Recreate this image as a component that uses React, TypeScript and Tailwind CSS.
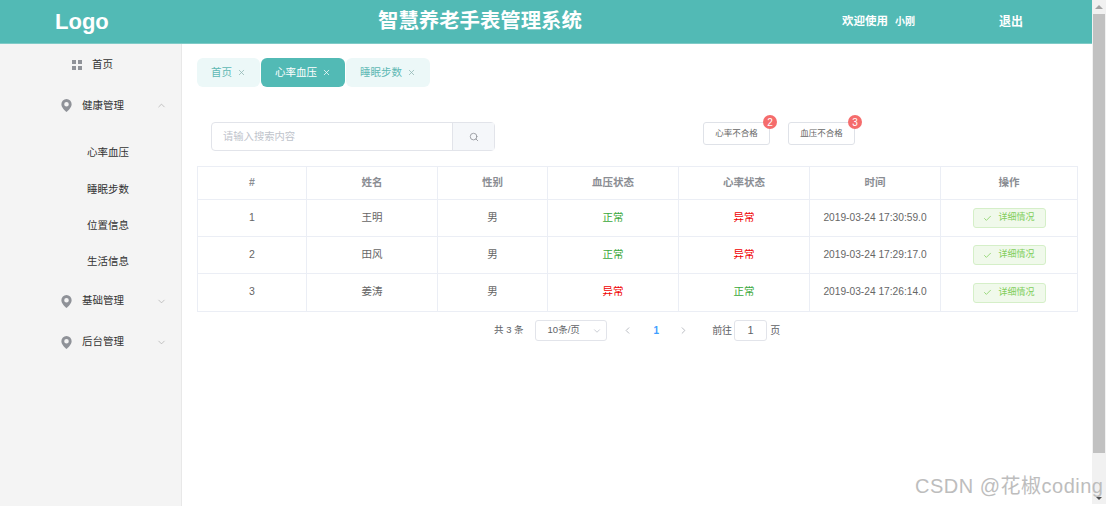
import React from 'react';
import { Check, ChevronDown, ChevronLeft, ChevronRight, ChevronUp, Search, X } from 'lucide-react';

const rows = [
  { id: 1, name: '王明', sex: '男', blood: '正常', heart: '异常', time: '2019-03-24 17:30:59.0' },
  { id: 2, name: '田风', sex: '男', blood: '正常', heart: '异常', time: '2019-03-24 17:29:17.0' },
  { id: 3, name: '姜涛', sex: '男', blood: '异常', heart: '正常', time: '2019-03-24 17:26:14.0' },
];

const headers = ['#', '姓名', '性别', '血压状态', '心率状态', '时间', '操作'];
const subMenu = ['心率血压', '睡眠步数', '位置信息', '生活信息'];

function Status({ value }: { value: string }) {
  return <span className={value === '正常' ? 'text-[#3aa83a]' : 'text-[#f00000]'}>{value}</span>;
}

function PinIcon() {
  return (
    <svg viewBox="0 0 12 14" className="h-[13px] w-[11px] fill-[#8f9298]">
      <path
        fillRule="evenodd"
        d="M6 0a5.6 5.6 0 0 1 5.6 5.6C11.600 9.200 7.500 12.800 6 14 4.500 12.800.4 9.200.4 5.600A5.600 5.600 0 0 1 6 0zm0 3.200a2.500 2.500 0 1 0 0 5 2.500 2.500 0 0 0 0-5z"
      />
    </svg>
  );
}

function MenuGroup({ label, open }: { label: string; open?: boolean }) {
  return (
    <div className="flex h-[41px] items-center pl-[61px] text-[10.5px] text-[#333]">
      <PinIcon />
      <span className="ml-[10px] w-[42px] whitespace-nowrap">{label}</span>
      {open ? (
        <ChevronUp className="ml-[32px] h-[11px] w-[11px] text-[#aaa]" strokeWidth={1.5} />
      ) : (
        <ChevronDown className="ml-[32px] h-[11px] w-[11px] text-[#aaa]" strokeWidth={1.5} />
      )}
    </div>
  );
}

function Tab({ label, active }: { label: string; active?: boolean }) {
  return (
    <div
      className={`flex h-[29px] items-center rounded-[6px] pl-[14px] pr-[14px] text-[10.5px] ${
        active ? 'bg-[#52bab5] text-white' : 'bg-[#ecf8f8] text-[#5fb9b4]'
      }`}
    >
      <span className="whitespace-nowrap">{label}</span>
      <X className={`ml-[5px] h-[9px] w-[9px] ${active ? 'text-white' : 'text-[#8fb5b3]'}`} />
    </div>
  );
}

function BadgeButton({ label, count }: { label: string; count: number }) {
  return (
    <div className="relative flex h-[23px] w-[67px] items-center justify-center rounded-[3px] border border-[#dfe2e8] bg-white text-[8.5px] text-[#666]">
      {label}
      <span className="absolute right-[-8px] top-[-8px] flex h-[14px] w-[14px] items-center justify-center rounded-full bg-[#f56c6c] text-[10px] text-white">
        {count}
      </span>
    </div>
  );
}

export default function App() {
  return (
    <div className="relative flex h-[506px] w-[1107px] overflow-hidden bg-white font-['Liberation_Sans','Noto_Sans_CJK_SC',sans-serif]">
      <div className="flex w-[1092px] flex-col">
        <header className="flex h-[44px] shrink-0 items-center border-b border-[#7fcbc7] bg-[#52bab5] text-white">
          <div className="w-[378px] pl-[55px] text-[22px] font-bold">Logo</div>
          <div className="w-[464px] text-[20.4px] font-bold">智慧养老手表管理系统</div>
          <div className="w-[157px] text-[11.5px] font-bold">
            欢迎使用<span className="ml-[7px] text-[10px]">小刚</span>
          </div>
          <div className="text-[12px] font-bold">退出</div>
        </header>

        <div className="flex flex-1">
          <aside className="w-[182px] shrink-0 border-r border-[#e8e8e8] bg-[#f4f4f4] pt-[1px]">
            <div className="flex h-[40px] items-center pl-[72px] text-[10.5px] text-[#333]">
              <div className="grid h-[10px] w-[10px] grid-cols-2 gap-[2px]">
                <span className="bg-[#8f9298]" />
                <span className="bg-[#8f9298]" />
                <span className="bg-[#8f9298]" />
                <span className="bg-[#8f9298]" />
              </div>
              <span className="ml-[10px]">首页</span>
            </div>
            <MenuGroup label="健康管理" open />
            <div className="pt-[9px]">
              {subMenu.map((item) => (
                <div key={item} className="flex h-[36.4px] items-center pl-[87px] text-[10.5px] text-[#333]">
                  {item}
                </div>
              ))}
            </div>
            <MenuGroup label="基础管理" />
            <MenuGroup label="后台管理" />
          </aside>

          <main className="flex-1 pl-[15px] pr-[14px] pt-[14px]">
            <div className="flex gap-[1px]">
              <Tab label="首页" />
              <Tab label="心率血压" active />
              <Tab label="睡眠步数" />
            </div>

            <div className="mt-[35px] flex h-[30px] items-start pl-[14px]">
              <div className="flex h-[29px] w-[284px] rounded-[4px] border border-[#e2e4ea]">
                <div className="flex-1 pl-[11px] text-[10.3px] leading-[27px] text-[#c0c4cc]">请输入搜索内容</div>
                <div className="flex w-[42px] items-center justify-center border-l border-[#e2e4ea] bg-[#f5f7fa]">
                  <Search className="h-[10px] w-[10px] text-[#909399]" />
                </div>
              </div>
              <div className="ml-[208px] flex gap-[18px]">
                <BadgeButton label="心率不合格" count={2} />
                <BadgeButton label="血压不合格" count={3} />
              </div>
            </div>

            <table className="mt-[14px] w-[880px] table-fixed border-collapse text-[10.5px] text-[#666]">
              <colgroup>
                <col className="w-[109px]" />
                <col className="w-[131px]" />
                <col className="w-[110px]" />
                <col className="w-[131px]" />
                <col className="w-[131px]" />
                <col className="w-[131px]" />
                <col className="w-[137px]" />
              </colgroup>
              <thead>
                <tr className="h-[33px]">
                  {headers.map((h) => (
                    <th key={h} className="border border-[#ebeef5] text-center font-bold text-[#8a8d93]">
                      {h}
                    </th>
                  ))}
                </tr>
              </thead>
              <tbody>
                {rows.map((r, i) => (
                  <tr key={r.id} className={`text-center ${i === 2 ? 'h-[38px]' : 'h-[37px]'}`}>
                    <td className="border border-[#ebeef5] pb-[1px]">{r.id}</td>
                    <td className="border border-[#ebeef5] pb-[1px]">{r.name}</td>
                    <td className="border border-[#ebeef5] pb-[1px]">{r.sex}</td>
                    <td className="border border-[#ebeef5] pb-[1px]"><Status value={r.blood} /></td>
                    <td className="border border-[#ebeef5] pb-[1px]"><Status value={r.heart} /></td>
                    <td className="border border-[#ebeef5] pb-[1px] text-[10.2px]">{r.time}</td>
                    <td className="border border-[#ebeef5]">
                      <div className="mx-auto flex h-[20px] w-[73px] items-center justify-center rounded-[3px] border border-[#d5efc8] bg-[#f0f9eb] text-[9px] text-[#7fce5a]">
                        <Check className="mr-[6px] h-[9px] w-[9px]" />
                        详细情况
                      </div>
                    </td>
                  </tr>
                ))}
              </tbody>
            </table>

            <div className="mt-[8px] flex h-[21px] items-center pl-[297px] text-[9.5px] text-[#606266]">
              <span className="whitespace-nowrap">共 3 条</span>
              <div className="ml-[11px] flex h-[21px] w-[72px] items-center rounded-[3px] border border-[#e2e4ea] pl-[12px] text-[#606266]">
                <span className="whitespace-nowrap">10条/页</span>
                <ChevronDown className="ml-[12px] h-[10px] w-[10px] text-[#c0c4cc]" />
              </div>
              <ChevronLeft className="ml-[15px] h-[11px] w-[11px] text-[#b4b7bd]" />
              <span className="ml-[21px] text-[10px] font-bold text-[#409eff]">1</span>
              <ChevronRight className="ml-[19px] h-[11px] w-[11px] text-[#b4b7bd]" />
              <span className="ml-[23px] whitespace-nowrap text-[10px]">前往</span>
              <div className="ml-[2px] flex h-[21px] w-[33px] items-center justify-center rounded-[3px] border border-[#e2e4ea] text-[11px]">
                1
              </div>
              <span className="ml-[3px] text-[10px]">页</span>
            </div>
          </main>
        </div>
      </div>

      {/* browser scrollbar from the screenshot */}
      <div className="flex h-[504px] w-[14px] flex-col items-center bg-[#f1f1f1]">
        <div className="mt-[5px] h-0 w-0 border-x-[4px] border-b-[4px] border-x-transparent border-b-[#a3a3a3]" />
        <div className="mt-[5px] h-[439px] w-[12px] bg-[#c1c1c1]" />
        <div className="mt-[44px] h-0 w-0 border-x-[3px] border-t-[3px] border-x-transparent border-t-[#505050]" />
      </div>

      <div className="absolute left-[915px] top-[473px] whitespace-nowrap text-[20px] leading-[26px] tracking-[0.5px] text-[#bdbdbd]">
        CSDN @花椒coding
      </div>
    </div>
  );
}
